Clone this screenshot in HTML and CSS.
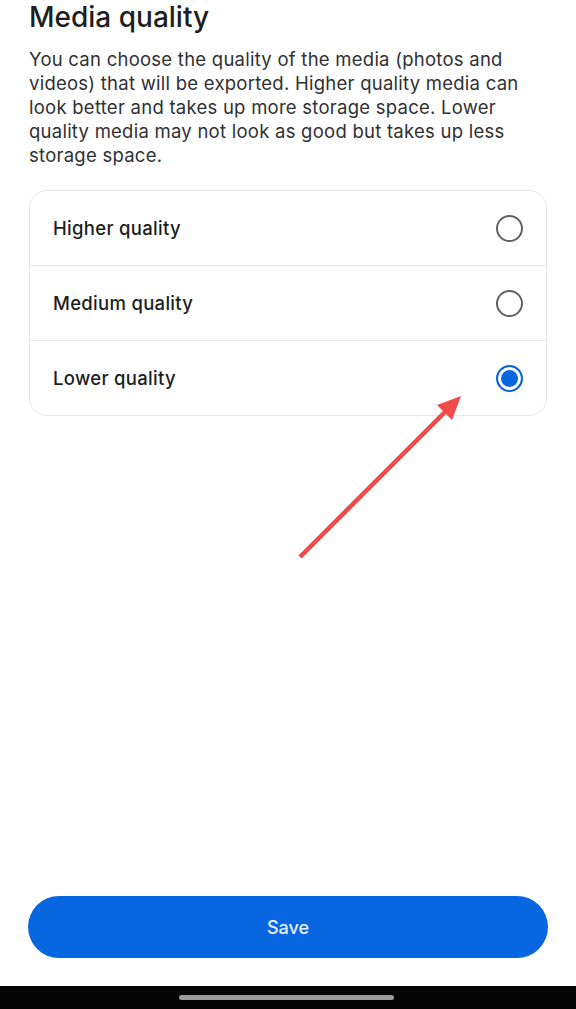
FILE: index.html
```html
<!DOCTYPE html>
<html>
<head>
<meta charset="utf-8">
<link rel="stylesheet" href="styles.css">
</head>
<body>
<div class="screen">
  <main class="content">
    <h1 class="title">Media quality</h1>
    <p class="desc">You can choose the quality of the media (photos and videos) that will be exported. Higher quality media can look better and takes up more storage space. Lower quality media may not look as good but takes up less storage space.</p>
    <div class="card">
      <div class="row"><span class="label">Higher quality</span><span class="radio"></span></div>
      <div class="row"><span class="label">Medium quality</span><span class="radio"></span></div>
      <div class="row"><span class="label">Lower quality</span><span class="radio selected"></span></div>
    </div>
  </main>
  <div class="footer">
    <button class="save">Save</button>
  </div>
  <div class="navbar"><span class="pill"></span></div>
  <svg class="arrow" width="576" height="1009" viewBox="0 0 576 1009">
    <line x1="300" y1="557" x2="447" y2="410" stroke="#f04a4a" stroke-width="4.5" stroke-linecap="butt"/>
    <polygon points="461,396 437,405 452,420" fill="#f04a4a"/>
  </svg>
</div>
</body>
</html>
```
FILE: styles.css
```css
html, body {
  margin: 0;
  padding: 0;
  background: #ffffff;
}
.screen {
  position: relative;
  width: 576px;
  height: 1009px;
  display: flex;
  flex-direction: column;
  font-family: Inter, "Open Sans", sans-serif;
  color: #1c1e21;
  overflow: hidden;
}
.content {
  flex: 1;
  padding: 0 29px;
}
.title {
  margin: 0;
  font-size: 28px;
  font-weight: 500;
  line-height: 34px;
  color: #1c1e21;
}
.desc {
  margin: 13px 0 0;
  font-size: 18.5px;
  letter-spacing: 0.25px;
  line-height: 24px;
  color: #2f3133;
}
.card {
  margin-top: 23px;
  border: 1.5px solid #e4e6e8;
  border-radius: 18px;
  overflow: hidden;
}
.row {
  height: 74px;
  display: flex;
  align-items: center;
  justify-content: space-between;
  padding: 0 23px 0 23px;
  border-top: 1px solid #e6e6e6;
}
.row:first-child {
  border-top: none;
}
.label {
  font-size: 18.5px;
  letter-spacing: 0.3px;
  font-weight: 500;
  color: #1c1e21;
}
.radio {
  width: 23px;
  height: 23px;
  border: 2.5px solid #606266;
  border-radius: 50%;
  box-sizing: content-box;
}
.radio.selected {
  border-color: #0a66e0;
  background: #0a66e0;
  box-shadow: inset 0 0 0 3px #ffffff;
}
.footer {
  padding: 0 28px 28px 28px;
}
.save {
  display: block;
  width: 100%;
  height: 62px;
  border: none;
  border-radius: 31px;
  background: #0866e0;
  color: #e8eef8;
  font-family: Inter, "Open Sans", sans-serif;
  font-size: 18px;
  font-weight: 500;
}
.navbar {
  height: 23px;
  background: #050505;
  display: flex;
  justify-content: center;
  align-items: center;
}
.pill {
  width: 215px;
  height: 5px;
  border-radius: 3px;
  background: #9a9a9a;
  margin-right: 4px;
}
.arrow {
  position: absolute;
  left: 0;
  top: 0;
  pointer-events: none;
}
```
